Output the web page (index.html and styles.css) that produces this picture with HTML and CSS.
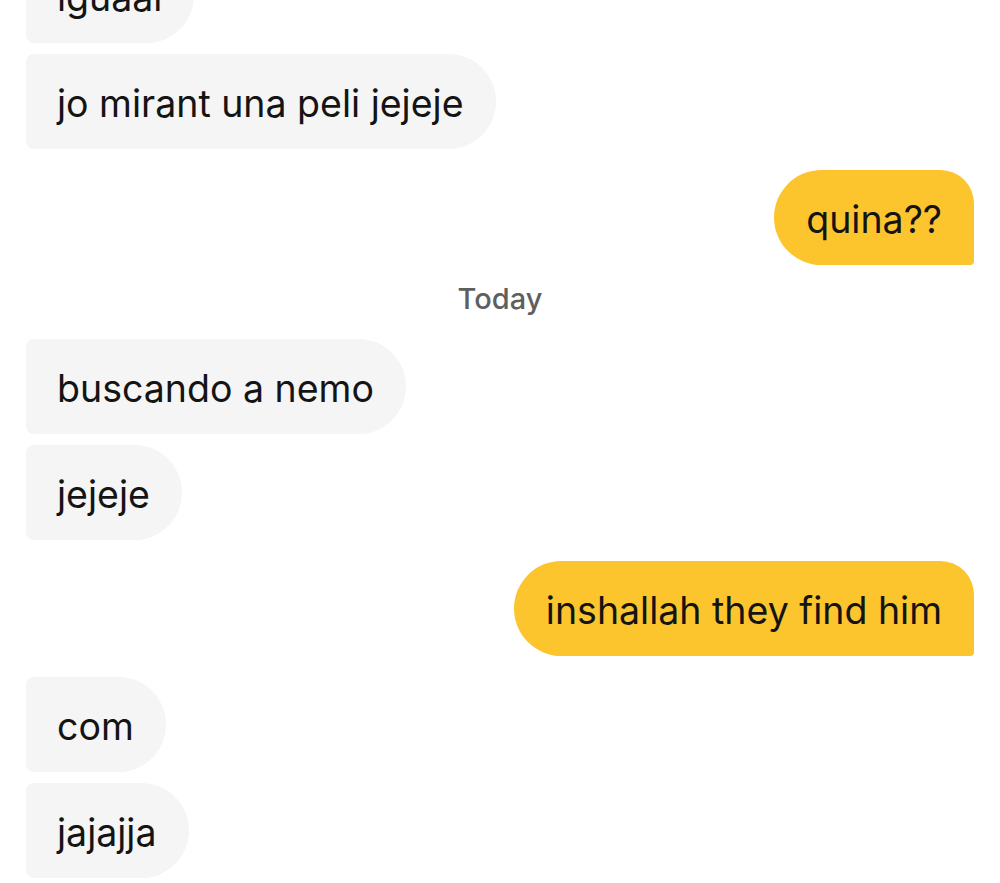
FILE: index.html
```html
<!DOCTYPE html>
<html lang="ca">
<head>
<meta charset="utf-8">
<link rel="stylesheet" href="styles.css">
</head>
<body>
<main class="chat">
  <div class="msg in">iguaal</div>
  <div class="msg in same">jo mirant una peli jejeje</div>
  <div class="msg out">quina??</div>
  <div class="day">Today</div>
  <div class="msg in first">buscando a nemo</div>
  <div class="msg in same">jejeje</div>
  <div class="msg out">inshallah they find him</div>
  <div class="msg in">com</div>
  <div class="msg in same">jajajja</div>
</main>
</body>
</html>
```
FILE: styles.css
```css
html, body {
  margin: 0;
  padding: 0;
  background: #ffffff;
  overflow: hidden;
}
.chat {
  display: flex;
  flex-direction: column;
  align-items: flex-start;
  padding: 0 26px;
  margin-top: -52px;
  font-family: Inter, "Noto Sans", sans-serif;
}
.msg {
  box-sizing: border-box;
  height: 95px;
  line-height: 90px;
  padding: 5px 32px 0 31px;
  font-size: 37.5px;
  color: #141414;
  white-space: nowrap;
  margin-top: 21px;
}
.msg:first-child { margin-top: 0; }
.msg.same { margin-top: 11px; }
.msg.first { margin-top: 0; }
.in {
  background: #f5f5f5;
  border-radius: 8px 48px 48px 8px;
}
.out {
  align-self: flex-end;
  background: #fcc52e;
  border-radius: 48px 34px 4px 48px;
  padding: 5px 32px 0 32px;
}
.day {
  align-self: center;
  height: 74px;
  line-height: 68px;
  font-size: 29px;
  font-weight: 500;
  color: #5f5f5f;
}
```
